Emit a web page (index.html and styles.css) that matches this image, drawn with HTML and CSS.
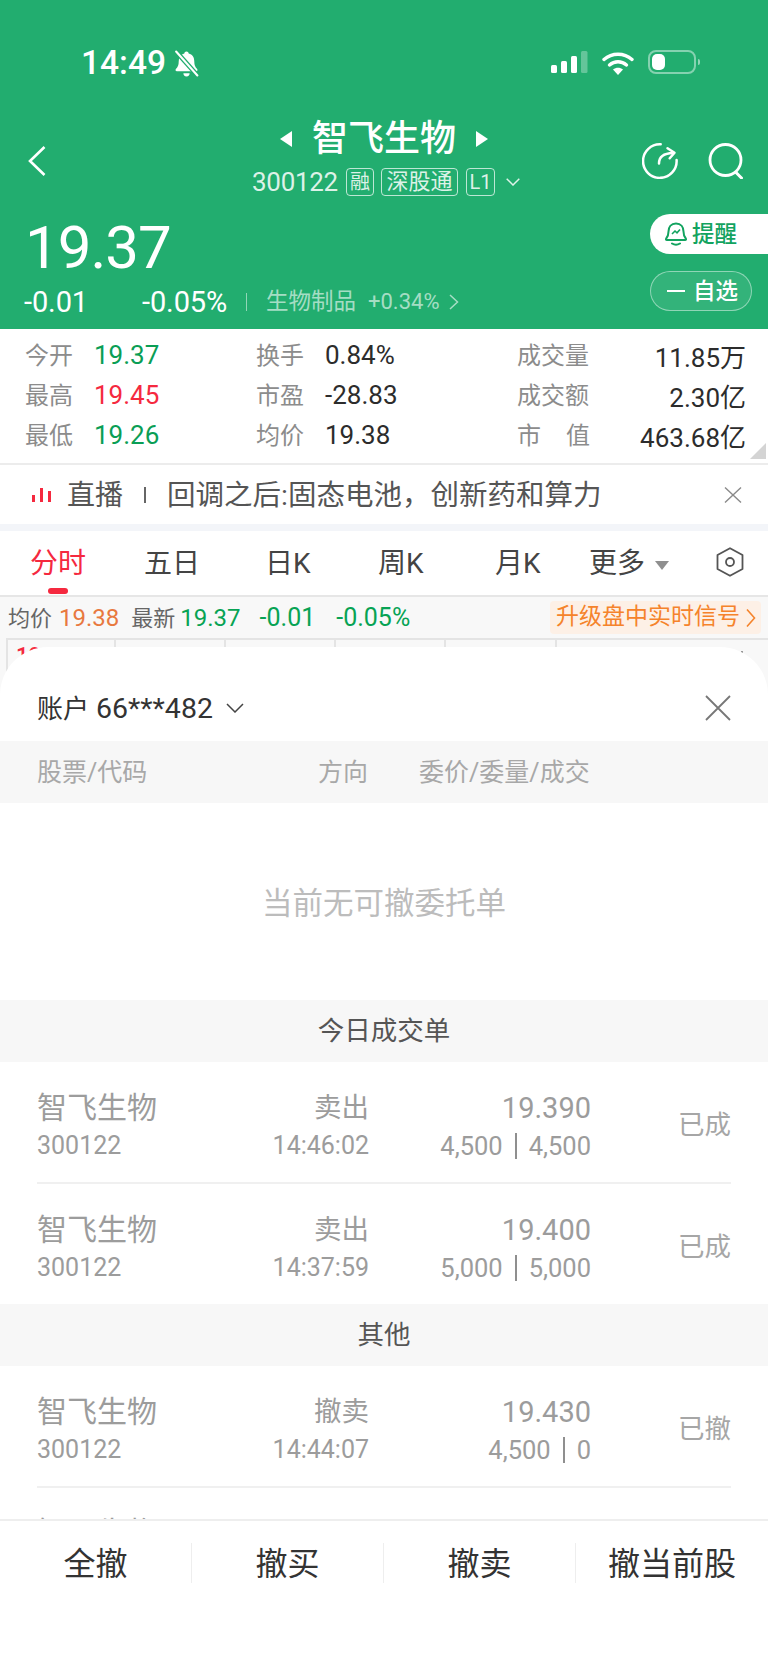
FILE: index.html
```html
<!DOCTYPE html>
<html lang="zh-CN">
<head>
<meta charset="utf-8">
<title>智飞生物</title>
<link rel="stylesheet" href="styles.css">
</head>
<body>
<div class="page">
  <header class="hero">
    <div class="status">
      <div class="status-left">
        <span class="clock">14:49</span>
        <svg class="bell-off" viewBox="0 0 26 26" width="27" height="27">
          <path d="M13 1.500c1.200 0 2 .8 2.100 1.900 3.600.9 5.400 3.700 5.400 7.600 0 3.400.8 5.300 2.700 7.300.8.9.3 2.200-.9 2.200H3.700c-1.200 0-1.700-1.300-.9-2.200C4.700 16.300 5.500 14.400 5.500 11c0-3.900 1.800-6.700 5.400-7.600.1-1.100.9-1.900 2.100-1.900z" fill="#fff"/>
          <path d="M10 22.500h6a3 3 0 0 1-6 0z" fill="#fff"/>
          <path d="M3.500 2 L24 25" stroke="#22ad6f" stroke-width="4.500"/>
          <path d="M3 1.500 L23.500 24.500" stroke="#fff" stroke-width="2" stroke-linecap="round"/>
        </svg>
      </div>
      <div class="status-right">
        <svg class="signal" viewBox="0 0 37 23" width="37" height="23">
          <rect x="0" y="14" width="6" height="8" rx="1.500" fill="#fff"/>
          <rect x="10" y="10" width="6" height="12" rx="1.500" fill="#fff"/>
          <rect x="20" y="5" width="6" height="17" rx="1.500" fill="#fff"/>
          <rect x="30" y="0" width="6.500" height="22" rx="1.500" fill="#fff" fill-opacity=".3"/>
        </svg>
        <svg class="wifi" viewBox="0 0 32 24" width="32" height="24">
          <path d="M2 8.500C10 1.500 22 1.500 30 8.500" fill="none" stroke="#fff" stroke-width="3.400" stroke-linecap="round"/>
          <path d="M7.500 14c5-4.300 12-4.300 17 0" fill="none" stroke="#fff" stroke-width="3.400" stroke-linecap="round"/>
          <path d="M11 18.500c3-2.300 7-2.300 10 0L16 24z" fill="#fff"/>
        </svg>
        <div class="battery"><span class="battery-fill"></span></div>
        <span class="battery-nub"></span>
      </div>
    </div>

    <div class="nav">
      <svg class="back" viewBox="0 0 18 30" width="18" height="30"><path d="M16.500 1 L2 15 L16.500 29" fill="none" stroke="#fff" stroke-width="2.600"/></svg>
      <div class="nav-center">
        <div class="title-row">
          <span class="tri tri-left"></span>
          <h1 class="title">智飞生物</h1>
          <span class="tri tri-right"></span>
        </div>
        <div class="code-row">
          <span class="code">300122</span>
          <span class="tag tag-rong">融</span>
          <span class="tag tag-sgt">深股通</span>
          <span class="tag tag-l1">L1</span>
          <svg class="code-caret" viewBox="0 0 14 8" width="14" height="8"><path d="M.7.7 7 7 13.300.7" fill="none" stroke="#fff" stroke-opacity=".85" stroke-width="1.500"/></svg>
        </div>
      </div>
      <div class="nav-actions">
        <svg viewBox="0 0 36 36" width="36" height="36">
          <path d="M18.700 1.300A16.800 16.800 0 1 0 34.600 17" fill="none" stroke="#fff" stroke-width="2.500" stroke-linecap="round"/>
          <path d="M17 20.500C17 14 21 10.300 31 10" fill="none" stroke="#fff" stroke-width="2.500" stroke-linecap="round"/>
          <path d="M25.500 5.300 32.500 9.800 27.700 15.300" fill="none" stroke="#fff" stroke-width="2.500" stroke-linecap="round" stroke-linejoin="round"/>
        </svg>
        <svg viewBox="0 0 36 36" width="36" height="36">
          <circle cx="17.500" cy="17" r="15.500" fill="none" stroke="#fff" stroke-width="2.800"/>
          <path d="M28 29.500 33.500 35" fill="none" stroke="#fff" stroke-width="3" stroke-linecap="round"/>
        </svg>
      </div>
    </div>

    <div class="quote">
      <div class="quote-left">
        <div class="price">19.37</div>
        <div class="change-row">
          <span class="chg chg-a">-0.01</span>
          <span class="chg chg-b">-0.05%</span>
          <span class="chg-sep"></span>
          <span class="sector">生物制品</span>
          <span class="sector-chg">+0.34%</span>
          <svg class="sector-arrow" viewBox="0 0 10 16" width="10" height="16"><path d="M1 1l7.500 7L1 15" fill="none" stroke="#fff" stroke-opacity=".6" stroke-width="1.500"/></svg>
        </div>
      </div>
      <div class="quote-right">
        <div class="remind">
          <svg viewBox="0 0 22 24" width="22" height="24">
            <path d="M11 1.500c5 0 7.500 3.500 7.500 8 0 3.500 1 5.500 2.300 7 .5.700.2 1.500-.7 1.500H1.900c-.9 0-1.200-.8-.7-1.500 1.300-1.500 2.300-3.500 2.300-7 0-4.500 2.500-8 7.500-8z" fill="none" stroke="#12a35f" stroke-width="2"/>
            <path d="M7 12l3-3 2 1.800 3-3.300" fill="none" stroke="#12a35f" stroke-width="1.600"/>
            <path d="M7 21.500c2.500 1.600 5.500 1.600 8 0" fill="none" stroke="#12a35f" stroke-width="2" stroke-linecap="round"/>
          </svg>
          <span class="btn-text">提醒</span>
        </div>
        <div class="watch"><span class="watch-dash"></span><span class="btn-text">自选</span></div>
      </div>
    </div>
  </header>

  <section class="stats">
    <div class="stat"><span class="stat-label">今开</span><span class="stat-val green">19.37</span></div>
    <div class="stat"><span class="stat-label">换手</span><span class="stat-val">0.84%</span></div>
    <div class="stat stat-end"><span class="stat-label">成交量</span><span class="stat-val">11.85万</span></div>
    <div class="stat"><span class="stat-label">最高</span><span class="stat-val red">19.45</span></div>
    <div class="stat"><span class="stat-label">市盈</span><span class="stat-val">-28.83</span></div>
    <div class="stat stat-end"><span class="stat-label">成交额</span><span class="stat-val">2.30亿</span></div>
    <div class="stat"><span class="stat-label">最低</span><span class="stat-val green">19.26</span></div>
    <div class="stat"><span class="stat-label">均价</span><span class="stat-val">19.38</span></div>
    <div class="stat stat-end"><span class="stat-label stat-spread"><span>市</span><span>值</span></span><span class="stat-val">463.68亿</span></div>
    <span class="corner"></span>
  </section>

  <section class="live">
    <div class="live-bars"><i class="b1"></i><i class="b2"></i><i class="b3"></i></div>
    <span class="live-tag">直播</span>
    <span class="live-sep"></span>
    <span class="live-text">回调之后:固态电池，创新药和算力</span>
    <svg class="live-close" viewBox="0 0 18 16" width="18" height="16"><path d="M1 .5 17 15.500M17 .5 1 15.500" stroke="#8a8a8a" stroke-width="1.400" fill="none"/></svg>
  </section>

  <nav class="tabs">
    <span class="tab tab-on">分时</span>
    <span class="tab">五日</span>
    <span class="tab">日K</span>
    <span class="tab">周K</span>
    <span class="tab">月K</span>
    <span class="tab tab-more">更多<i class="more-tri"></i></span>
    <svg class="tab-gear" viewBox="0 0 28 30" width="28" height="30">
      <path d="M14 1.200 26.500 8v14L14 28.800 1.500 22V8z" fill="none" stroke="#555" stroke-width="1.800" stroke-linejoin="round"/>
      <circle cx="14" cy="15" r="4" fill="none" stroke="#555" stroke-width="1.800"/>
    </svg>
  </nav>

  <section class="info">
    <span class="info-l">均价</span><span class="info-v orange">19.38</span>
    <span class="info-l info-l2">最新</span><span class="info-v green2">19.37</span>
    <span class="info-v green2 info-c1">-0.01</span>
    <span class="info-v green2 info-c2">-0.05%</span>
    <span class="upgrade"><span class="upgrade-text">升级盘中实时信号</span><svg viewBox="0 0 10 20" width="10" height="20"><path d="M1 1.500 8.500 10 1 18.500" fill="none" stroke="#f5832b" stroke-width="1.600"/></svg></span>
  </section>

  <div class="chart-area">
    <div class="chart">
      <div class="cell cell-first"><span class="axis">19.6</span></div>
      <div class="cell"></div>
      <div class="cell"></div>
      <div class="cell"></div>
      <div class="cell cell-wide"></div>
      <div class="cell cell-last"><span class="tick"></span></div>
    </div>
  </div>

  <aside class="sheet">
    <div class="sheet-head">
      <span class="acct-label">账户</span>
      <span class="acct-num">66***482</span>
      <svg class="acct-caret" viewBox="0 0 18 10" width="18" height="10"><path d="M1 1l8 8 8-8" fill="none" stroke="#444" stroke-width="1.500"/></svg>
      <svg class="sheet-close" viewBox="0 0 26 26" width="26" height="26"><path d="M1 1 25 25M25 1 1 25" stroke="#777" stroke-width="1.800" fill="none"/></svg>
    </div>
    <div class="cols">
      <span class="col-name">股票/代码</span>
      <span class="col-dir">方向</span>
      <span class="col-price">委价/委量/成交</span>
    </div>
    <div class="empty">当前无可撤委托单</div>
    <div class="list">
      <div class="section">今日成交单</div>
      <div class="row">
        <div class="c-name"><div class="big">智飞生物</div><div class="small">300122</div></div>
        <div class="c-dir"><div class="big">卖出</div><div class="small">14:46:02</div></div>
        <div class="c-price"><div class="big num">19.390</div><div class="small">4,500<i class="pipe"></i>4,500</div></div>
        <div class="c-state">已成</div>
      </div>
      <div class="row row-last">
        <div class="c-name"><div class="big">智飞生物</div><div class="small">300122</div></div>
        <div class="c-dir"><div class="big">卖出</div><div class="small">14:37:59</div></div>
        <div class="c-price"><div class="big num">19.400</div><div class="small">5,000<i class="pipe"></i>5,000</div></div>
        <div class="c-state">已成</div>
      </div>
      <div class="section">其他</div>
      <div class="row">
        <div class="c-name"><div class="big">智飞生物</div><div class="small">300122</div></div>
        <div class="c-dir"><div class="big">撤卖</div><div class="small">14:44:07</div></div>
        <div class="c-price"><div class="big num">19.430</div><div class="small">4,500<i class="pipe"></i>0</div></div>
        <div class="c-state">已撤</div>
      </div>
      <div class="row">
        <div class="c-name"><div class="big">智飞生物</div></div>
      </div>
    </div>
    <div class="foot">
      <span class="foot-btn">全撤</span>
      <span class="foot-btn">撤买</span>
      <span class="foot-btn">撤卖</span>
      <span class="foot-btn">撤当前股</span>
    </div>
  </aside>
</div>
</body>
</html>
```
FILE: styles.css
```css
* { box-sizing: border-box; margin: 0; padding: 0; }
html, body { background: #fff; }
body { width: 768px; height: 1670px; overflow: hidden; font-family: Roboto, "Noto Sans CJK SC", sans-serif; color: #333; }
i { font-style: normal; display: block; }
.page { position: relative; width: 768px; height: 1670px; overflow: hidden; background: #fff; }

/* hero */
.hero { height: 329px; background: #22ad6f; color: #fff; padding-top: 50px; }
.status { height: 26px; display: flex; justify-content: space-between; }
.status-left { display: flex; align-items: center; padding-left: 81px; gap: 7px; }
.clock { font-size: 33.500px; font-weight: 500; line-height: 26px; }
.status-right { display: flex; align-items: flex-start; padding-right: 68px; }
.signal { margin-top: 1px; margin-right: 14px; }
.wifi { margin-top: 1px; margin-right: 14px; }
.battery { width: 48px; height: 24px; border: 2px solid rgba(255,255,255,.45); border-radius: 8px; padding: 2px; }
.battery-fill { display: block; width: 13px; height: 16px; background: #fff; border-radius: 5px; }
.battery-nub { width: 2px; height: 6px; margin: 9px 0 0 2px; background: rgba(255,255,255,.5); border-radius: 0 2px 2px 0; }

.nav { height: 76px; margin-top: 45px; display: grid; grid-template-columns: 1fr auto 1fr; align-items: start; padding: 0 28px; }
.back { margin-top: 25px; }
.nav-center { display: flex; flex-direction: column; align-items: center; }
.title-row { display: flex; align-items: center; height: 34px; gap: 20px; margin-top: 1px; }
.title { font-size: 36px; font-weight: 500; line-height: 34px; }
.tri { width: 0; height: 0; border-top: 8px solid transparent; border-bottom: 8px solid transparent; }
.tri-left { border-right: 12px solid #fff; }
.tri-right { border-left: 12px solid #fff; }
.code-row { display: flex; align-items: center; height: 28px; margin: 12px 0 0 4px; color: rgba(255,255,255,.85); }
.code { font-size: 26px; line-height: 28px; letter-spacing: -.3px; margin-right: 8px; }
.tag { border: 1px solid rgba(255,255,255,.7); border-radius: 4px; height: 28px; font-size: 22px; line-height: 26px; display: block; text-align: center; }
.tag-rong { width: 28px; margin-right: 7px; font-size: 20px; }
.tag-sgt { width: 77px; margin-right: 8px; }
.tag-l1 { width: 29px; margin-right: 11px; font-size: 20px; }
.nav-actions { justify-self: end; display: flex; gap: 30px; margin: 22px -4px 0 0; }

.quote { display: flex; justify-content: space-between; margin-top: 17px; padding-left: 24px; }
.price { font-size: 60px; line-height: 60px; margin-left: 1px; margin-top: 4px; letter-spacing: -1px; }
.change-row { display: flex; align-items: center; height: 24px; margin-top: 12px; }
.chg { font-size: 29px; line-height: 24px; letter-spacing: -.1px; }
.chg-a { width: 118px; }
.chg-b { width: 104px; }
.chg-sep { width: 1px; height: 18px; background: rgba(255,255,255,.5); margin-right: 19px; }
.sector { font-size: 22.500px; color: rgba(255,255,255,.6); line-height: 24px; margin-right: 12px; margin-bottom: 2px; }
.sector-chg { font-size: 22px; color: rgba(255,255,255,.6); line-height: 24px; margin-right: 9px; }
.quote-right { display: flex; flex-direction: column; width: 118px; }
.remind { height: 40px; background: #fff; border-radius: 20px 0 0 20px; display: flex; align-items: center; padding-left: 15px; gap: 5px; color: #12a35f; font-size: 22.500px; font-weight: 500; }
.watch { width: 102px; height: 40px; margin-top: 17px; border: 1px solid rgba(255,255,255,.45); background: rgba(255,255,255,.08); border-radius: 20px; display: flex; align-items: center; padding-left: 16px; gap: 8px; font-size: 22.500px; font-weight: 500; }
.btn-text { margin-bottom: 4px; }
.watch-dash { width: 18px; height: 2px; background: #fff; }

/* stats */
.stats { position: relative; display: grid; grid-template-columns: 231px 261px 1fr; grid-auto-rows: 40px; padding: 6px 22px 8px 25px; height: 136px; border-bottom: 2px solid #ececec; }
.stat { display: flex; align-items: center; gap: 21px; }
.stat-end { justify-content: space-between; }
.stat-label { font-size: 24px; color: #8c8c8c; width: 48px; white-space: nowrap; margin-bottom: 4px; }
.stat-end .stat-label { width: 73px; }
.stat-spread { display: flex; justify-content: space-between; }
.stat-val { font-size: 26px; color: #2c2c2c; }
.green { color: #0a9e55; }
.red { color: #f5293f; }
.corner { position: absolute; right: 2px; bottom: 4px; width: 16px; height: 16px; background: #d4d4d4; clip-path: polygon(100% 0, 100% 100%, 0 100%); }

/* live */
.live { height: 59px; display: flex; align-items: center; padding-left: 32px; }
.live-bars { display: flex; align-items: flex-end; gap: 5px; height: 14px; width: 19px; margin-right: 16px; }
.live-bars i { width: 3px; background: #f5293f; }
.b1 { height: 7px; }
.b2 { height: 14px; }
.b3 { height: 11px; }
.live-tag { font-size: 28px; color: #555; margin-right: 21px; margin-bottom: 4px; }
.live-sep { width: 2px; height: 16px; background: #666; margin-right: 21px; }
.live-text { font-size: 28.500px; color: #555; white-space: nowrap; margin-right: 123px; margin-bottom: 4px; }
.live-close { flex: none; }

/* tabs */
.tabs { position: relative; display: block; height: 73px; border-top: 7px solid #f3f5f9; border-bottom: 2px solid #e6e6e6; }
.tab { position: absolute; top: 14px; font-size: 28px; line-height: 38px; color: #444; white-space: nowrap; }
.tab:nth-child(1) { left: 30px; }
.tab:nth-child(2) { left: 144px; }
.tab:nth-child(3) { left: 265px; }
.tab:nth-child(4) { left: 378px; }
.tab:nth-child(5) { left: 495px; }
.tab:nth-child(6) { left: 589px; }
.tab-on { color: #f5293f; }
.tab-on::after { content: ""; position: absolute; left: 18px; top: 43px; width: 20px; height: 6px; background: #f5293f; border-radius: 3px; }
.more-tri { display: inline-block; width: 0; height: 0; margin-left: 10px; border-left: 7px solid transparent; border-right: 7px solid transparent; border-top: 9px solid #8f8f8f; vertical-align: 3px; }
.tab-gear { position: absolute; left: 716px; top: 16px; }

/* info row */
.info { height: 41px; background: #f8f8f8; display: flex; align-items: center; padding: 0 7px 0 8px; white-space: nowrap; }
.info-l { font-size: 22px; color: #666; margin: 0 7px 4px 0; }
.info-l2 { margin: 0 5px 4px 12px; }
.info-v { font-size: 24px; }
.orange { color: #e8793f; }
.green2 { color: #07a354; }
.info-c1 { font-size: 25px; margin-left: 19px; }
.info-c2 { font-size: 25px; margin-left: 21px; }
.upgrade { margin-left: auto; width: 211px; height: 33px; background: #fdf0e6; color: #f5832b; font-size: 23px; line-height: 33px; border-radius: 4px; padding-left: 6px; display: flex; align-items: center; gap: 6px; }
.upgrade-text { margin-bottom: 3px; }

/* chart */
.chart-area { background: #f8f8f8; padding-left: 6px; height: 70px; }
.chart { display: flex; height: 70px; border-top: 2px solid #e4e4e4; border-left: 2px solid #e4e4e4; }
.cell { width: 110px; border-right: 2px solid #e4e4e4; padding-top: 3px; }
.cell-first { width: 108px; padding-left: 8px; }
.cell-wide { width: 111px; }
.cell-last { flex: 1; border-right: 0; }
.axis { display: block; font-size: 22px; font-weight: 500; line-height: 26px; color: #f5293f; }
.tick { display: block; width: 2px; height: 2px; margin: 8px 0 0 184px; background: #999; }

/* sheet */
.sheet { position: absolute; left: 0; right: 0; top: 647px; bottom: 0; background: #fff; border-radius: 48px 48px 0 0; display: flex; flex-direction: column; overflow: hidden; }
.sheet-head { height: 94px; display: flex; align-items: center; padding: 28px 37px 0 37px; }
.acct-label { font-size: 26px; color: #333; margin: 0 7px 3px 0; }
.acct-num { font-size: 28.500px; color: #333; margin-right: 13px; }
.sheet-close { margin-left: auto; }
.cols { height: 62px; background: #f7f7f7; position: relative; font-size: 25px; color: #a8a8a8; display: flex; align-items: center; padding: 0 0 4px 37px; }
.col-name { width: 281px; }
.col-dir { width: 101px; }
.empty { height: 197px; display: flex; align-items: center; justify-content: center; font-size: 30.500px; color: #bcbcbc; padding-bottom: 2px; }
.list { flex: 1; min-height: 0; overflow: hidden; }
.section { height: 62px; background: #f7f7f7; display: flex; align-items: center; justify-content: center; font-size: 26.500px; color: #555; padding-bottom: 5px; }
.row { height: 122px; margin: 0 37px; display: flex; align-items: center; color: #9c9c9c; border-bottom: 2px solid #f0f0f0; padding-top: 10px; }
.row-last { border-bottom: 0; height: 120px; }
.row:last-child { align-items: flex-start; padding-top: 26px; border-bottom: 0; }
.big { font-size: 29px; line-height: 38px; }
.small { font-size: 25.500px; line-height: 38px; display: flex; align-items: center; }
.c-name { width: 235px; }
.c-name .big { font-size: 30px; }
.c-name .small { font-size: 25px; }
.c-dir { width: 97px; text-align: right; }
.c-dir .big { font-size: 27.500px; }
.c-dir .small { font-size: 25px; justify-content: flex-end; }
.c-price { width: 222px; text-align: right; }
.c-price .small { justify-content: flex-end; }
.pipe { width: 2px; height: 26px; background: #8f8f8f; margin: 0 12px; }
.c-state { margin: 0 0 9px auto; font-size: 26.500px; color: #a6a6a6; }
.foot { flex: none; height: 151px; background: #fff; border-top: 2px solid #eee; display: flex; padding-top: 22px; align-items: flex-start; position: relative; }
.foot-btn { width: 192px; height: 40px; line-height: 42px; text-align: center; font-size: 32px; color: #333; border-right: 1px solid #eee; }
.foot-btn:last-child { border-right: 0; }
```
